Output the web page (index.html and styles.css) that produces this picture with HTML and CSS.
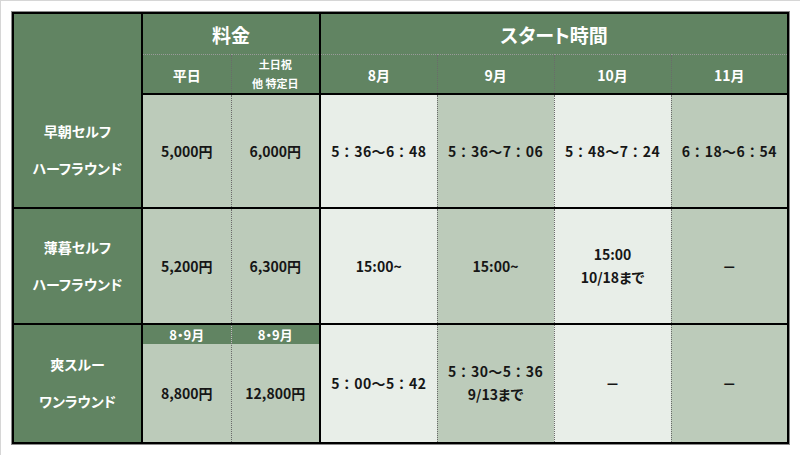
FILE: index.html
```html
<!DOCTYPE html>
<html lang="ja">
<head>
<meta charset="utf-8">
<title>料金・スタート時間</title>
<link rel="stylesheet" href="styles.css">
</head>
<body>
<div class="page">
  <table class="plan">
    <colgroup>
      <col class="c-label">
      <col class="c-price">
      <col class="c-price">
      <col class="c-month">
      <col class="c-month">
      <col class="c-month">
      <col class="c-month">
    </colgroup>
    <thead>
      <tr class="h1">
        <th class="corner" rowspan="2"></th>
        <th class="group sep-right" colspan="2">料金</th>
        <th class="group" colspan="4">スタート時間</th>
      </tr>
      <tr class="h2">
        <th class="sub">平日</th>
        <th class="sub small sep-right"><span>土日祝</span><span>他 特定日</span></th>
        <th class="sub">8月</th>
        <th class="sub">9月</th>
        <th class="sub">10月</th>
        <th class="sub">11月</th>
      </tr>
    </thead>
    <tbody>
      <tr class="r1">
        <th class="label"><span>早朝セルフ</span><span>ハーフラウンド</span></th>
        <td class="sage">5,000円</td>
        <td class="sage sep-right">6,000円</td>
        <td class="pale time">5：36～6：48</td>
        <td class="sage time">5：36～7：06</td>
        <td class="pale time">5：48～7：24</td>
        <td class="sage time">6：18～6：54</td>
      </tr>
      <tr class="r2">
        <th class="label"><span>薄暮セルフ</span><span>ハーフラウンド</span></th>
        <td class="sage">5,200円</td>
        <td class="sage sep-right">6,300円</td>
        <td class="pale">15:00~</td>
        <td class="sage">15:00~</td>
        <td class="pale two"><span>15:00</span><span>10/18まで</span></td>
        <td class="sage">－</td>
      </tr>
      <tr class="r3">
        <th class="label"><span>爽スルー</span><span>ワンラウンド</span></th>
        <td class="sage split"><div class="strip">8・9月</div><div class="val">8,800円</div></td>
        <td class="sage split sep-right"><div class="strip">8・9月</div><div class="val">12,800円</div></td>
        <td class="pale time">5：00～5：42</td>
        <td class="sage two"><span class="time">5：30～5：36</span><span>9/13まで</span></td>
        <td class="pale">－</td>
        <td class="sage">－</td>
      </tr>
    </tbody>
  </table>
</div>
</body>
</html>
```

FILE: styles.css
```css
html, body {
  margin: 0;
  padding: 0;
  background: #ffffff;
}

.page {
  box-sizing: border-box;
  width: 800px;
  height: 455px;
  border-top: 1px solid #d6d6d6;
  border-left: 1px solid #d6d6d6;
  padding: 11px 0 0 11px;
  font-family: "Noto Sans CJK JP", "Noto Sans", sans-serif;
  font-feature-settings: "palt";
  font-weight: 700;
  color: #161616;
}

.plan {
  border-collapse: collapse;
  table-layout: fixed;
  width: 775px;
  border: 2px solid #000;
  box-shadow: 0 0 0 1px #8a8a8a;
}

.c-label { width: 129px; }
.c-price { width: 89px; }
.c-month { width: 117px; }

.plan th,
.plan td {
  padding: 0;
  text-align: center;
  vertical-align: middle;
  border-left: 1px dotted #6a6a6a;
  border-right: 1px dotted #6a6a6a;
}

.plan thead th {
  background: #618462;
  color: #ffffff;
}

.corner {
  border-right: 2px solid #000 !important;
}

.h1 { height: 41px; }
.h1 .group {
  font-size: 19px;
  border-bottom: 1px dotted #9a9a9a;
  padding-top: 1px;
}

.h2 { height: 36px; }
.h2 .sub {
  font-size: 14px;
  border-top: 1px dotted #9a9a9a;
  border-bottom: 2px solid #000;
  padding-top: 3px;
}

.h2 .sub.small {
  font-size: 11px;
  line-height: 19px;
  padding-top: 0;
}

.h2 .sub.small span,
.label span,
.two span {
  display: block;
}

.sep-right {
  border-right: 2px solid #000 !important;
}

.plan tbody tr {
  border-bottom: 2px solid #000;
}

.r1 { height: 114px; }
.r2 { height: 116px; }
.r3 { height: 117px; }

.label {
  background: #618462;
  color: #ffffff;
  font-size: 14px;
  line-height: 37px;
  border-right: 2px solid #000 !important;
}

.plan td {
  font-size: 14px;
}

.time {
  font-feature-settings: normal;
  letter-spacing: 0.4px;
}

.sage { background: #bccbba; }
.pale { background: #e8eee8; }

.two span {
  line-height: 23px;
}

.split {
  vertical-align: top !important;
}

.split .strip {
  height: 19px;
  line-height: 19px;
  background: #618462;
  color: #ffffff;
  font-size: 13px;
}

.split .val {
  height: 98px;
  display: flex;
  align-items: center;
  justify-content: center;
}
```
